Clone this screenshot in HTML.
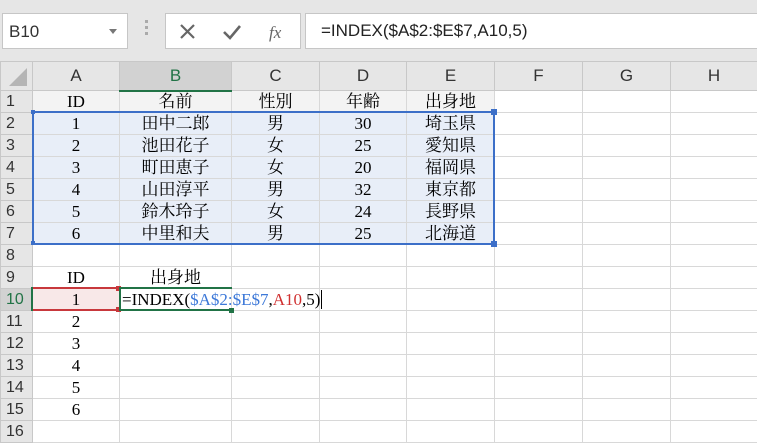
<!DOCTYPE html>
<html><head><meta charset="utf-8"><style>
*{margin:0;padding:0;box-sizing:border-box}
body{width:757px;height:443px;overflow:hidden;background:#fff;position:relative;font-family:"Liberation Sans","Noto Sans CJK JP",sans-serif}
.top{position:absolute;left:0;top:0;width:757px;height:61px;background:#e6e6e6}
.nb{position:absolute;left:2px;top:13px;width:126px;height:36px;background:#fff;border:1px solid #c6c6c6;font-size:17px;color:#333;padding:8px 0 0 6px}
.nb:after{content:"";position:absolute;right:10px;top:15px;border:4px solid transparent;border-top:5px solid #777}
.dots{position:absolute;left:145px;top:20px;width:3px;height:18px;background:repeating-linear-gradient(#aaa 0 3px,transparent 3px 6px)}
.btn{position:absolute;left:165px;top:13px;width:136px;height:36px;background:#fff;border:1px solid #c6c6c6}
.fb{position:absolute;left:305px;top:13px;width:452px;height:36px;background:#fff;border:1px solid #c6c6c6;border-right:none;font-size:17px;color:#222;padding:7px 0 0 15px}
table{position:absolute;left:0;top:61px;width:757px;border-collapse:collapse;table-layout:fixed;font-family:"Liberation Serif","Noto Serif CJK JP",serif;font-size:17px}
td{border:1px solid #d8d8d8;height:22px;text-align:center;padding:0;line-height:20px;white-space:nowrap;overflow:visible}
tr.h td{height:29px;background:#e6e6e6;font-family:"Liberation Sans",sans-serif;font-size:17px;color:#333;border-color:#c8c8c8}
td.r{background:#e6e6e6;font-family:"Liberation Sans",sans-serif;font-size:16px;color:#333;text-align:left;padding-left:5px;border-color:#c8c8c8}
.bl{background:#e8eef8}
.g1{background:#f3f3f3}
</style></head><body>
<div class="top"></div>
<div class="nb">B10</div>
<div class="dots"></div>
<div class="btn">
<svg width="136" height="36" style="position:absolute;left:0;top:0"><path d="M15 11l13 13M28 11l-13 13" stroke="#666" stroke-width="2.2"/><path d="M58 18l6 6 10-12" stroke="#666" stroke-width="2.6" fill="none"/><text x="103" y="24" font-family="Liberation Serif" font-style="italic" font-size="17" fill="#666">fx</text></svg>
</div>
<div class="fb">=INDEX($A$2:$E$7,A10,5)</div>
<table>
<colgroup><col style="width:32px"><col style="width:87px"><col style="width:112px"><col style="width:88px"><col style="width:87px"><col style="width:88px"><col style="width:88px"><col style="width:88px"><col style="width:87px"></colgroup>
<tr class="h"><td style="position:relative"><svg width="30" height="28" style="position:absolute;left:0;top:0"><path d="M26 6L26 24L8 24Z" fill="#b5b5b5"/></svg></td><td>A</td><td style="background:#d2d2d2;border-bottom:2px solid #217346;color:#217346">B</td><td>C</td><td>D</td><td>E</td><td>F</td><td>G</td><td>H</td></tr>
<tr><td class="r">1</td><td class="g1">ID</td><td class="g1">名前</td><td class="g1">性別</td><td class="g1">年齢</td><td class="g1">出身地</td><td></td><td></td><td></td></tr>
<tr><td class="r">2</td><td class="bl">1</td><td class="bl">田中二郎</td><td class="bl">男</td><td class="bl">30</td><td class="bl">埼玉県</td><td></td><td></td><td></td></tr>
<tr><td class="r">3</td><td class="bl">2</td><td class="bl">池田花子</td><td class="bl">女</td><td class="bl">25</td><td class="bl">愛知県</td><td></td><td></td><td></td></tr>
<tr><td class="r">4</td><td class="bl">3</td><td class="bl">町田恵子</td><td class="bl">女</td><td class="bl">20</td><td class="bl">福岡県</td><td></td><td></td><td></td></tr>
<tr><td class="r">5</td><td class="bl">4</td><td class="bl">山田淳平</td><td class="bl">男</td><td class="bl">32</td><td class="bl">東京都</td><td></td><td></td><td></td></tr>
<tr><td class="r">6</td><td class="bl">5</td><td class="bl">鈴木玲子</td><td class="bl">女</td><td class="bl">24</td><td class="bl">長野県</td><td></td><td></td><td></td></tr>
<tr><td class="r">7</td><td class="bl">6</td><td class="bl">中里和夫</td><td class="bl">男</td><td class="bl">25</td><td class="bl">北海道</td><td></td><td></td><td></td></tr>
<tr><td class="r">8</td><td></td><td></td><td></td><td></td><td></td><td></td><td></td><td></td></tr>
<tr><td class="r">9</td><td>ID</td><td>出身地</td><td></td><td></td><td></td><td></td><td></td><td></td></tr>
<tr><td class="r" style="background:#d2d2d2;color:#217346">10</td><td style="background:#f8e8e8">1</td><td style="text-align:left;padding-left:2px">=INDEX(<span style="color:#3c78d8">$A$2:$E$7</span>,<span style="color:#d03030">A10</span>,5)<span style="border-left:1px solid #000;margin-left:1px"></span></td><td></td><td></td><td></td><td></td><td></td><td></td></tr>
<tr><td class="r">11</td><td>2</td><td></td><td></td><td></td><td></td><td></td><td></td><td></td></tr>
<tr><td class="r">12</td><td>3</td><td></td><td></td><td></td><td></td><td></td><td></td><td></td></tr>
<tr><td class="r">13</td><td>4</td><td></td><td></td><td></td><td></td><td></td><td></td><td></td></tr>
<tr><td class="r">14</td><td>5</td><td></td><td></td><td></td><td></td><td></td><td></td><td></td></tr>
<tr><td class="r">15</td><td>6</td><td></td><td></td><td></td><td></td><td></td><td></td><td></td></tr>
<tr><td class="r">16</td><td></td><td></td><td></td><td></td><td></td><td></td><td></td><td></td></tr>
</table>
<div style="position:absolute;left:32px;top:111px;width:463px;height:134px;border:2px solid #3c6fc8"></div>
<div style="position:absolute;left:31px;top:110px;width:4px;height:4px;background:#3c6fc8"></div>
<div style="position:absolute;left:491px;top:109px;width:6px;height:6px;background:#3c6fc8"></div>
<div style="position:absolute;left:31px;top:241px;width:4px;height:4px;background:#3c6fc8"></div>
<div style="position:absolute;left:491px;top:241px;width:6px;height:6px;background:#3c6fc8"></div>
<div style="position:absolute;left:32px;top:287px;width:88px;height:24px;border-top:2px solid #c8383c;border-bottom:2px solid #c8383c;border-right:1px solid #c8383c"></div>
<div style="position:absolute;left:31px;top:287px;width:2px;height:24px;background:#217346"></div>
<div style="position:absolute;left:116px;top:286px;width:5px;height:5px;background:#c8383c"></div>
<div style="position:absolute;left:116px;top:307px;width:5px;height:5px;background:#c8383c"></div>
<div style="position:absolute;left:119px;top:287px;width:113px;height:24px;border:2px solid #217346;border-right:none"></div>
<div style="position:absolute;left:229px;top:308px;width:5px;height:5px;background:#217346"></div>
</body></html>
